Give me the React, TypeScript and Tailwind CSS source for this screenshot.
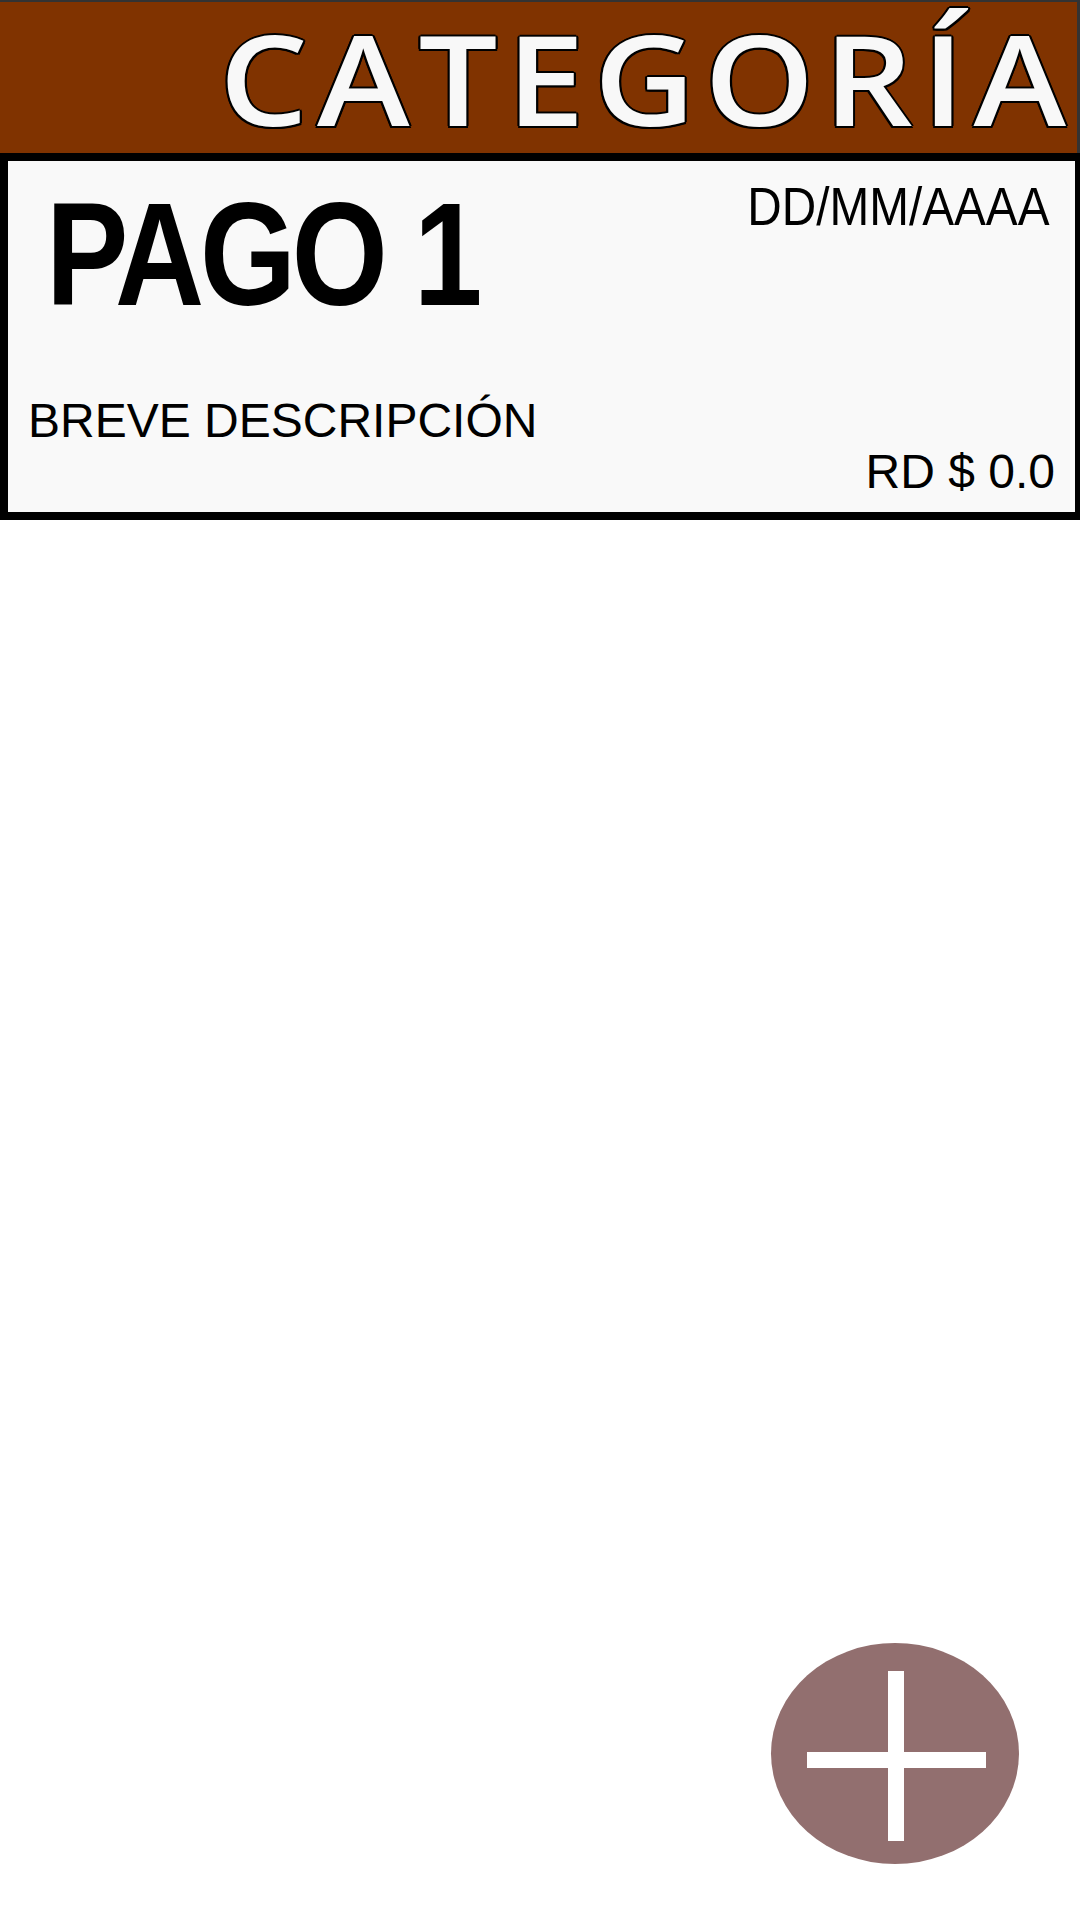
import React from "react";

// pantalla de pagos por categoría
export default function App() {
  return (
    <div className="relative min-h-[1920px] w-[1080px] bg-white">
      <header className="flex h-[153px] justify-end border-t-2 border-r-[3px] border-[#333333] bg-[#803300] pr-[2px] pt-[13px]">
        <span className="inline-block origin-right scale-x-[1.12] text-[125px] font-semibold leading-none tracking-[8px] text-[#f8f8f8] [font-family:'Open_Sans',sans-serif] [text-shadow:2px_0_0_#000,-2px_0_0_#000,0_2px_0_#000,0_-2px_0_#000,1.5px_1.5px_0_#000,-1.5px_1.5px_0_#000,1.5px_-1.5px_0_#000,-1.5px_-1.5px_0_#000]">
          CATEGORÍA
        </span>
      </header>

      <PaymentCard title="PAGO 1" date="DD/MM/AAAA" description="BREVE DESCRIPCIÓN" amount="RD $ 0.0" />

      <button className="absolute left-[771px] top-[1643px] h-[221px] w-[248px] rounded-[50%] bg-[#926f6f]">
        <svg width="248" height="221" viewBox="0 0 248 221" className="block">
          <rect x="117" y="28" width="16" height="170" fill="white" />
          <rect x="36" y="109" width="179" height="16" fill="white" />
        </svg>
      </button>
    </div>
  );
}

function PaymentCard({ title, date, description, amount }: { title: string; date: string; description: string; amount: string }) {
  return (
    <section className="flex h-[367px] flex-col border-[8px] border-r-[5px] border-black bg-[#f9f9f9] [font-family:'Liberation_Sans',Arial,sans-serif] text-black">
      <div className="flex items-start justify-between pt-[19px]">
        <div className="pl-[38px]">
          <div className="mt-[1px] origin-left scale-x-[0.84] text-[147px] font-bold leading-none tracking-[-5px]">{title}</div>
        </div>
        <div className="origin-right scale-x-[0.9] pr-[28px] text-[53px] leading-none">{date}</div>
      </div>
      <div className="mt-[69px] pl-[20px] text-[48px] leading-none">{description}</div>
      <div className="mt-[3px] self-end pr-[20px] text-[48px] leading-none">{amount}</div>
    </section>
  );
}
